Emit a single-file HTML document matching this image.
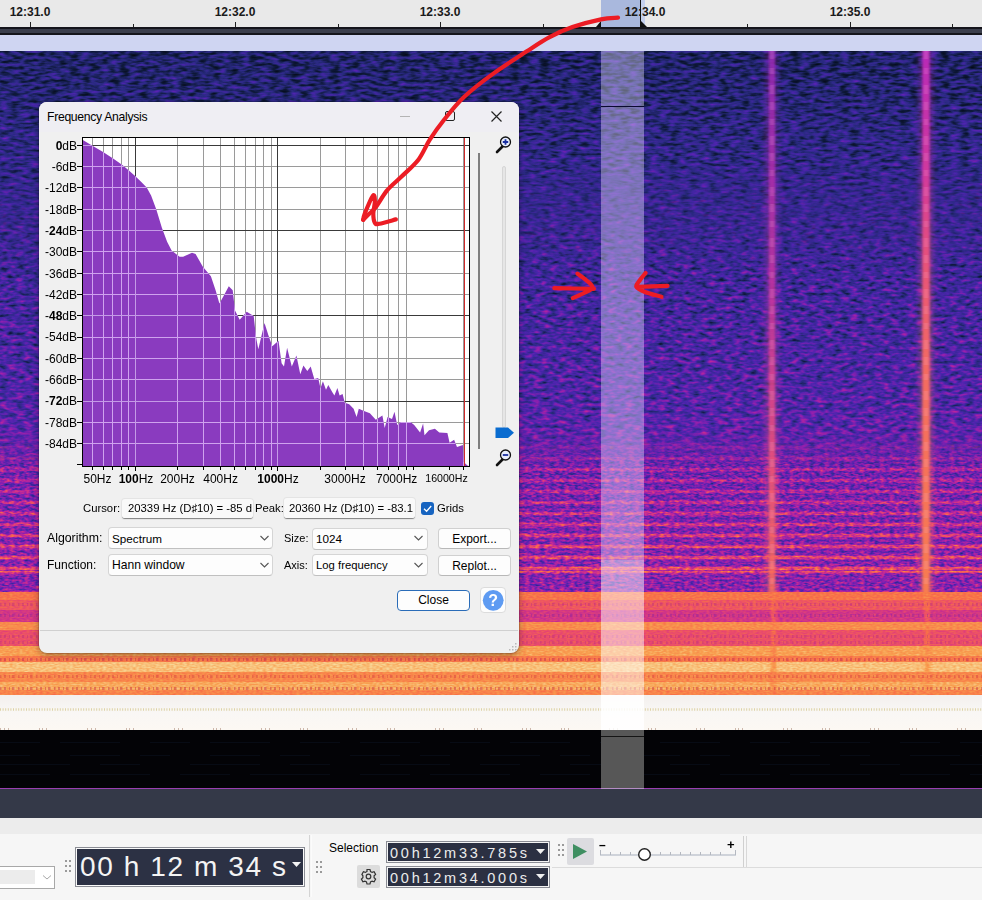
<!DOCTYPE html>
<html><head><meta charset="utf-8">
<style>
html,body{margin:0;padding:0;}
body{width:982px;height:900px;overflow:hidden;position:relative;background:#e9e9e9;font-family:"Liberation Sans",sans-serif;}
.abs{position:absolute;}
#ruler{left:0;top:0;width:982px;height:27px;background:#e9e9e9;}
.rl{position:absolute;top:5px;font-weight:bold;font-size:12px;line-height:14px;color:#1a1a1a;width:60px;text-align:center;margin-left:-30px;}
.tk{position:absolute;width:1px;background:#222;}
#bar{left:0;top:27px;width:982px;height:8px;background:#3b3e4c;border-top:2px solid #15151c;border-bottom:2px solid #15151c;box-sizing:border-box;}
#lav{left:0;top:35px;width:982px;height:16px;background:#cfd5f2;}
#black{left:0;top:730px;width:982px;height:58px;background:#030306;}
#pline{left:0;top:788px;width:982px;height:1px;background:#9a3fb0;}
#slate{left:0;top:789px;width:982px;height:29px;background:#343948;}
#tb1{left:0;top:818px;width:982px;height:16px;background:#ececec;}
#tb2{left:0;top:834px;width:982px;height:66px;background:#f6f6f6;}
#dlg{left:39px;top:102px;width:480px;height:551px;background:#f0f0f0;border-radius:8px;box-shadow:0 0 0 1px rgba(0,0,0,0.12),0 2px 7px rgba(0,0,0,0.35);overflow:hidden;}
.dbl{position:absolute;left:21px;width:56px;text-align:right;font-size:12px;line-height:15px;color:#000;}
.dbl b,.fql b{font-weight:bold;}
.fql{position:absolute;top:472px;width:80px;text-align:center;font-size:12px;line-height:15px;color:#000;}
.lbl{position:absolute;font-size:12px;line-height:15px;color:#000;white-space:nowrap;}
.combo{position:absolute;background:#fdfdfd;border:1px solid #d5d5d5;border-bottom-color:#c0c0c0;border-radius:4px;box-sizing:border-box;}
.btn{position:absolute;background:#fdfdfd;border:1px solid #d0d0d0;border-bottom-color:#b8b8b8;border-radius:4px;box-sizing:border-box;font-size:12px;text-align:center;color:#000;}

</style></head>
<body>
<div id="ruler" class="abs">
  <div class="rl" style="left:30px">12:31.0</div>
  <div class="rl" style="left:235px">12:32.0</div>
  <div class="rl" style="left:440px">12:33.0</div>
  <div class="rl" style="left:850px">12:35.0</div>
  <div class="tk" style="left:30px;top:22px;height:5px"></div>
  <div class="tk" style="left:235px;top:22px;height:5px"></div>
  <div class="tk" style="left:440px;top:22px;height:5px"></div>
  <div class="tk" style="left:850px;top:22px;height:5px"></div>
  <div class="tk" style="left:133px;top:24px;height:3px"></div>
  <div class="tk" style="left:338px;top:24px;height:3px"></div>
  <div class="tk" style="left:543px;top:24px;height:3px"></div>
  <div class="tk" style="left:747px;top:24px;height:3px"></div>
  <div class="tk" style="left:952px;top:24px;height:3px"></div>
  <div class="abs" style="left:601px;top:0;width:40px;height:27px;background:#a9b8dd"></div>
  <div class="abs" style="left:641px;top:0;width:4px;height:27px;background:#c4d0ee"></div>
  <div class="rl" style="left:645px">12:34.0</div>
  <div class="abs" style="left:640px;top:0;width:1px;height:27px;background:#111"></div>
  <svg class="abs" style="left:594px;top:21px" width="56" height="7"><polygon points="2,6 7,0 7,6" fill="#111"/><polygon points="47,0 53,6 47,6" fill="#111"/></svg>
</div>
<div id="bar" class="abs"></div>
<div id="lav" class="abs"></div>

<svg class="abs" style="left:0;top:51px" width="982" height="679" viewBox="0 51 982 679">
<defs>
<linearGradient id="gu" x1="0" y1="51" x2="0" y2="470" gradientUnits="userSpaceOnUse"><stop offset="0.0000" stop-color="#292929"/><stop offset="0.1169" stop-color="#2f2f2f"/><stop offset="0.3556" stop-color="#3c3c3c"/><stop offset="0.5943" stop-color="#444444"/><stop offset="0.8329" stop-color="#4c4c4c"/><stop offset="1.0000" stop-color="#595959"/></linearGradient>
<linearGradient id="gm" x1="0" y1="430" x2="0" y2="592" gradientUnits="userSpaceOnUse"><stop offset="0.0000" stop-color="#535353"/><stop offset="0.0617" stop-color="#555555"/><stop offset="0.0926" stop-color="#575757"/><stop offset="0.1019" stop-color="#6d6d6d"/><stop offset="0.1142" stop-color="#6d6d6d"/><stop offset="0.1235" stop-color="#575757"/><stop offset="0.1605" stop-color="#595959"/><stop offset="0.1698" stop-color="#717171"/><stop offset="0.1821" stop-color="#717171"/><stop offset="0.1914" stop-color="#595959"/><stop offset="0.2284" stop-color="#5a5a5a"/><stop offset="0.2377" stop-color="#757575"/><stop offset="0.2500" stop-color="#757575"/><stop offset="0.2593" stop-color="#5a5a5a"/><stop offset="0.2963" stop-color="#5b5b5b"/><stop offset="0.3056" stop-color="#797979"/><stop offset="0.3179" stop-color="#797979"/><stop offset="0.3272" stop-color="#5b5b5b"/><stop offset="0.3642" stop-color="#5c5c5c"/><stop offset="0.3735" stop-color="#7c7c7c"/><stop offset="0.3858" stop-color="#7c7c7c"/><stop offset="0.3951" stop-color="#5c5c5c"/><stop offset="0.4321" stop-color="#5e5e5e"/><stop offset="0.4414" stop-color="#808080"/><stop offset="0.4537" stop-color="#808080"/><stop offset="0.4630" stop-color="#5e5e5e"/><stop offset="0.5000" stop-color="#5f5f5f"/><stop offset="0.5093" stop-color="#848484"/><stop offset="0.5216" stop-color="#848484"/><stop offset="0.5309" stop-color="#5f5f5f"/><stop offset="0.5679" stop-color="#606060"/><stop offset="0.5772" stop-color="#888888"/><stop offset="0.5895" stop-color="#888888"/><stop offset="0.5988" stop-color="#606060"/><stop offset="0.6358" stop-color="#626262"/><stop offset="0.6451" stop-color="#8c8c8c"/><stop offset="0.6574" stop-color="#8c8c8c"/><stop offset="0.6667" stop-color="#626262"/><stop offset="0.7037" stop-color="#636363"/><stop offset="0.7130" stop-color="#909090"/><stop offset="0.7253" stop-color="#909090"/><stop offset="0.7346" stop-color="#636363"/><stop offset="0.7716" stop-color="#646464"/><stop offset="0.7809" stop-color="#949494"/><stop offset="0.7932" stop-color="#949494"/><stop offset="0.8025" stop-color="#646464"/><stop offset="0.8395" stop-color="#666666"/><stop offset="0.8488" stop-color="#989898"/><stop offset="0.8611" stop-color="#989898"/><stop offset="0.8704" stop-color="#666666"/><stop offset="0.8395" stop-color="#696969"/><stop offset="0.8519" stop-color="#9e9e9e"/><stop offset="0.8765" stop-color="#9e9e9e"/><stop offset="0.8889" stop-color="#666666"/><stop offset="0.9877" stop-color="#666666"/><stop offset="1.0000" stop-color="#737373"/></linearGradient>
<linearGradient id="gl" x1="0" y1="592" x2="0" y2="695" gradientUnits="userSpaceOnUse"><stop offset="0.0049" stop-color="#b5b5b5"/><stop offset="0.0728" stop-color="#b5b5b5"/><stop offset="0.0825" stop-color="#a3a3a3"/><stop offset="0.1699" stop-color="#a3a3a3"/><stop offset="0.1796" stop-color="#8c8c8c"/><stop offset="0.2864" stop-color="#8c8c8c"/><stop offset="0.2961" stop-color="#c2c2c2"/><stop offset="0.3641" stop-color="#c2c2c2"/><stop offset="0.3738" stop-color="#9e9e9e"/><stop offset="0.5194" stop-color="#9e9e9e"/><stop offset="0.5291" stop-color="#cccccc"/><stop offset="0.6165" stop-color="#cccccc"/><stop offset="0.6262" stop-color="#b8b8b8"/><stop offset="0.6748" stop-color="#b8b8b8"/><stop offset="0.6845" stop-color="#dbdbdb"/><stop offset="0.7718" stop-color="#dbdbdb"/><stop offset="0.7816" stop-color="#bfbfbf"/><stop offset="0.8689" stop-color="#bfbfbf"/><stop offset="0.8786" stop-color="#d1d1d1"/><stop offset="0.9466" stop-color="#d1d1d1"/><stop offset="0.9563" stop-color="#bdbdbd"/><stop offset="0.9951" stop-color="#bdbdbd"/></linearGradient>
<linearGradient id="mk" x1="0" y1="430" x2="0" y2="470" gradientUnits="userSpaceOnUse"><stop offset="0" stop-color="#000"/><stop offset="1" stop-color="#fff"/></linearGradient>
<mask id="mm" maskUnits="userSpaceOnUse" x="0" y="430" width="982" height="162"><rect x="0" y="430" width="982" height="162" fill="url(#mk)"/></mask>
<linearGradient id="mk2" x1="0" y1="160" x2="0" y2="280" gradientUnits="userSpaceOnUse"><stop offset="0" stop-color="#000"/><stop offset="1" stop-color="#fff"/></linearGradient>
<mask id="mu" maskUnits="userSpaceOnUse" x="0" y="160" width="982" height="310"><rect x="0" y="160" width="982" height="310" fill="url(#mk2)"/></mask>
<filter id="ft" x="0" y="0" width="100%" height="100%" color-interpolation-filters="sRGB" filterUnits="objectBoundingBox"><feTurbulence type="fractalNoise" baseFrequency="0.1 0.3" numOctaves="2" seed="5" result="t"/><feColorMatrix in="t" type="matrix" values="1 0 0 0 0 1 0 0 0 0 1 0 0 0 0 0 0 0 0 1" result="tg"/><feComposite in="SourceGraphic" in2="tg" operator="arithmetic" k1="0" k2="1" k3="0.42" k4="-0.21" result="sum"/><feComponentTransfer in="sum"><feFuncR type="table" tableValues="0.020 0.039 0.059 0.112 0.165 0.231 0.298 0.420 0.541 0.647 0.753 0.831 0.910 0.941 0.973 0.973 0.973 0.973 0.973 0.982 0.992"/><feFuncG type="table" tableValues="0.039 0.071 0.102 0.133 0.165 0.155 0.145 0.135 0.125 0.141 0.157 0.220 0.282 0.361 0.439 0.533 0.627 0.737 0.847 0.910 0.973"/><feFuncB type="table" tableValues="0.094 0.165 0.235 0.373 0.510 0.596 0.682 0.686 0.690 0.643 0.596 0.518 0.439 0.361 0.282 0.298 0.314 0.455 0.596 0.769 0.941"/><feFuncA type="linear" slope="0" intercept="1"/></feComponentTransfer></filter>
<filter id="fu" x="0" y="0" width="100%" height="100%" color-interpolation-filters="sRGB" filterUnits="objectBoundingBox"><feTurbulence type="fractalNoise" baseFrequency="0.12 0.28" numOctaves="2" seed="7" result="t"/><feColorMatrix in="t" type="matrix" values="1 0 0 0 0 1 0 0 0 0 1 0 0 0 0 0 0 0 0 1" result="tg"/><feComposite in="SourceGraphic" in2="tg" operator="arithmetic" k1="0" k2="1" k3="0.5" k4="-0.25" result="sum"/><feComponentTransfer in="sum"><feFuncR type="table" tableValues="0.020 0.039 0.059 0.112 0.165 0.231 0.298 0.420 0.541 0.647 0.753 0.831 0.910 0.941 0.973 0.973 0.973 0.973 0.973 0.982 0.992"/><feFuncG type="table" tableValues="0.039 0.071 0.102 0.133 0.165 0.155 0.145 0.135 0.125 0.141 0.157 0.220 0.282 0.361 0.439 0.533 0.627 0.737 0.847 0.910 0.973"/><feFuncB type="table" tableValues="0.094 0.165 0.235 0.373 0.510 0.596 0.682 0.686 0.690 0.643 0.596 0.518 0.439 0.361 0.282 0.298 0.314 0.455 0.596 0.769 0.941"/><feFuncA type="linear" slope="0" intercept="1"/></feComponentTransfer></filter>
<filter id="fm" x="0" y="0" width="100%" height="100%" color-interpolation-filters="sRGB" filterUnits="objectBoundingBox"><feTurbulence type="fractalNoise" baseFrequency="0.2 0.45" numOctaves="2" seed="23" result="t"/><feColorMatrix in="t" type="matrix" values="1 0 0 0 0 1 0 0 0 0 1 0 0 0 0 0 0 0 0 1" result="tg"/><feComposite in="SourceGraphic" in2="tg" operator="arithmetic" k1="0" k2="1" k3="0.5" k4="-0.25" result="sum"/><feComponentTransfer in="sum"><feFuncR type="table" tableValues="0.020 0.039 0.059 0.112 0.165 0.231 0.298 0.420 0.541 0.647 0.753 0.831 0.910 0.941 0.973 0.973 0.973 0.973 0.973 0.982 0.992"/><feFuncG type="table" tableValues="0.039 0.071 0.102 0.133 0.165 0.155 0.145 0.135 0.125 0.141 0.157 0.220 0.282 0.361 0.439 0.533 0.627 0.737 0.847 0.910 0.973"/><feFuncB type="table" tableValues="0.094 0.165 0.235 0.373 0.510 0.596 0.682 0.686 0.690 0.643 0.596 0.518 0.439 0.361 0.282 0.298 0.314 0.455 0.596 0.769 0.941"/><feFuncA type="linear" slope="0" intercept="1"/></feComponentTransfer></filter>
<filter id="fl" x="0" y="0" width="100%" height="100%" color-interpolation-filters="sRGB" filterUnits="objectBoundingBox"><feTurbulence type="fractalNoise" baseFrequency="0.3 0.7" numOctaves="1" seed="13" result="t"/><feColorMatrix in="t" type="matrix" values="1 0 0 0 0 1 0 0 0 0 1 0 0 0 0 0 0 0 0 1" result="tg"/><feComposite in="SourceGraphic" in2="tg" operator="arithmetic" k1="0" k2="1" k3="0.16" k4="-0.08" result="sum"/><feComponentTransfer in="sum"><feFuncR type="table" tableValues="0.020 0.039 0.059 0.112 0.165 0.231 0.298 0.420 0.541 0.647 0.753 0.831 0.910 0.941 0.973 0.973 0.973 0.973 0.973 0.982 0.992"/><feFuncG type="table" tableValues="0.039 0.071 0.102 0.133 0.165 0.155 0.145 0.135 0.125 0.141 0.157 0.220 0.282 0.361 0.439 0.533 0.627 0.737 0.847 0.910 0.973"/><feFuncB type="table" tableValues="0.094 0.165 0.235 0.373 0.510 0.596 0.682 0.686 0.690 0.643 0.596 0.518 0.439 0.361 0.282 0.298 0.314 0.455 0.596 0.769 0.941"/><feFuncA type="linear" slope="0" intercept="1"/></feComponentTransfer></filter>
<linearGradient id="c1" x1="0" y1="51" x2="0" y2="592" gradientUnits="userSpaceOnUse"><stop offset="0" stop-color="#9a2ab8"/><stop offset="0.45" stop-color="#c4369e"/><stop offset="0.75" stop-color="#ec5478"/><stop offset="1" stop-color="#f87058"/></linearGradient>
<linearGradient id="c2" x1="0" y1="51" x2="0" y2="592" gradientUnits="userSpaceOnUse"><stop offset="0" stop-color="#b82ab8"/><stop offset="0.22" stop-color="#d0389e"/><stop offset="0.4" stop-color="#e85478"/><stop offset="0.6" stop-color="#f46c60"/><stop offset="1" stop-color="#f87c50"/></linearGradient>
<filter id="bl2" x="-1" y="0" width="3" height="1"><feGaussianBlur stdDeviation="1.0 0"/></filter>
<filter id="bl" x="-1" y="0" width="3" height="1"><feGaussianBlur stdDeviation="1.5 0"/></filter>
</defs>
<g filter="url(#ft)"><rect x="0" y="51" width="982" height="230" fill="url(#gu)"/></g>
<g mask="url(#mu)"><g filter="url(#fu)"><rect x="0" y="160" width="982" height="310" fill="url(#gu)"/></g></g>
<g mask="url(#mm)"><g filter="url(#fm)"><rect x="0" y="430" width="982" height="162" fill="url(#gm)"/></g></g>
<filter id="bl3" x="-2" y="0" width="5" height="1"><feGaussianBlur stdDeviation="3 0"/></filter>
<g filter="url(#bl3)" opacity="0.45"><rect x="766" y="51" width="11" height="541" fill="url(#c1)"/><rect x="920" y="51" width="12" height="541" fill="url(#c2)"/></g>
<g filter="url(#bl2)"><rect x="769" y="51" width="6" height="541" fill="url(#c1)" opacity="0.8"/><rect x="922.5" y="51" width="7" height="541" fill="url(#c2)"/></g>
<g opacity="0.16" stroke="#ffc0f0" stroke-width="5" stroke-dasharray="8 9 6 11 9 8" filter="url(#bl2)"><line x1="772" y1="51" x2="772" y2="592"/><line x1="926" y1="51" x2="926" y2="592"/></g>
<g filter="url(#fl)">
<rect x="0" y="592" width="982" height="103" fill="url(#gl)"/>
<g filter="url(#bl)"><rect x="771" y="592" width="5" height="103" fill="#b8b8b8" opacity="0.6"/><rect x="924" y="592" width="6" height="103" fill="#bdbdbd" opacity="0.5"/></g>
</g>
<line x1="0" y1="604.5" x2="982" y2="604.5" stroke="#b02a80" stroke-width="3" stroke-dasharray="1.5 2.5 2 3 1 2 2.5 3.5" opacity="0.35"/>
<line x1="0" y1="615.5" x2="982" y2="615.5" stroke="#8a2a9a" stroke-width="3" stroke-dasharray="1.5 2.5 2 3 1 2 2.5 3.5" opacity="0.4"/>
<line x1="0" y1="636.5" x2="982" y2="636.5" stroke="#b02a80" stroke-width="3" stroke-dasharray="1.5 2.5 2 3 1 2 2.5 3.5" opacity="0.35"/>
<line x1="0" y1="642.5" x2="982" y2="642.5" stroke="#b02a80" stroke-width="3" stroke-dasharray="1.5 2.5 2 3 1 2 2.5 3.5" opacity="0.3"/>
<line x1="0" y1="659.5" x2="982" y2="659.5" stroke="#c02850" stroke-width="3" stroke-dasharray="1.5 2.5 2 3 1 2 2.5 3.5" opacity="0.45"/>
<line x1="0" y1="676.5" x2="982" y2="676.5" stroke="#d03a40" stroke-width="3" stroke-dasharray="1.5 2.5 2 3 1 2 2.5 3.5" opacity="0.4"/>
<line x1="0" y1="688.5" x2="982" y2="688.5" stroke="#c83040" stroke-width="3" stroke-dasharray="1.5 2.5 2 3 1 2 2.5 3.5" opacity="0.45"/>
<linearGradient id="wb" x1="0" y1="695" x2="0" y2="730" gradientUnits="userSpaceOnUse"><stop offset="0" stop-color="#f3f0ee"/><stop offset="0.5" stop-color="#f9f7f5"/><stop offset="1" stop-color="#fcf8f3"/></linearGradient>
<rect x="0" y="695" width="982" height="35" fill="url(#wb)"/>
<line x1="0" y1="709.5" x2="982" y2="709.5" stroke="#ddd3a6" stroke-width="2.5" stroke-dasharray="1 1.6"/>
<line x1="0" y1="729" x2="982" y2="729" stroke="#b09080" stroke-width="2" stroke-dasharray="1 3 1 3 1 30 1 2 1 3 1 40" opacity="0.6"/>
<rect x="601" y="51" width="43" height="55" fill="#e8e4ff" opacity="0.4"/>
<rect x="601" y="106" width="43" height="454" fill="#e8dcff" opacity="0.42"/>
<rect x="601" y="560" width="43" height="135" fill="#ffffff" opacity="0.5"/>
<rect x="601" y="695" width="43" height="35" fill="#ffffff" opacity="0.85"/>
<line x1="601" y1="106.5" x2="644" y2="106.5" stroke="#0a0a30" stroke-width="1"/>
</svg>
<div id="black" class="abs"></div>
<svg class="abs" style="left:0;top:730px" width="982" height="58"><g stroke="#0e1626" stroke-width="1" opacity="0.45"><line x1="0" y1="12.5" x2="982" y2="12.5" stroke-dasharray="40 20 60 30"/><line x1="0" y1="25.5" x2="982" y2="25.5" stroke-dasharray="30 40 50 20"/><line x1="0" y1="34.5" x2="982" y2="34.5" stroke-dasharray="70 30 40 50"/><line x1="0" y1="44.5" x2="982" y2="44.5" stroke-dasharray="50 20 80 30"/></g></svg>
<div class="abs" style="left:601px;top:730px;width:43px;height:58px;background:#575757"></div>
<div class="abs" style="left:601px;top:736px;width:43px;height:1px;background:#151515"></div>
<div id="pline" class="abs"></div>
<div class="abs" style="left:601px;top:788px;width:43px;height:1px;background:#b48cc4"></div>
<div id="slate" class="abs"></div>
<div id="tb1" class="abs"></div>
<div id="tb2" class="abs"></div>
<!-- left combobox -->
<div class="abs" style="left:-4px;top:866px;width:59px;height:23px;background:#fff;border:1px solid #a8a8a8;box-sizing:border-box"></div>
<div class="abs" style="left:0;top:870px;width:35px;height:14px;background:#ececec"></div>
<svg class="abs" style="left:42px;top:872px" width="12" height="10"><polyline points="1,3.5 5,7 9,3.5" fill="none" stroke="#a8a8a8" stroke-width="1"/></svg>
<!-- grips -->
<svg class="abs" style="left:64px;top:859px" width="8" height="16"><g fill="#9a9a9a"><rect x="1" y="1" width="2" height="2"/><rect x="5" y="1" width="2" height="2"/><rect x="1" y="6" width="2" height="2"/><rect x="5" y="6" width="2" height="2"/><rect x="1" y="11" width="2" height="2"/><rect x="5" y="11" width="2" height="2"/></g></svg>
<!-- big time -->
<div class="abs" style="left:75px;top:847px;width:230px;height:40px;background:#2c3144;border:1px solid #8a8c94;box-shadow:inset 0 0 0 1px #fafafa, inset 0 0 0 2px #2c3144;box-sizing:border-box"></div>
<div class="abs" style="left:80px;top:851px;font-size:28px;line-height:32px;color:#f4f4f4;letter-spacing:1.6px;white-space:nowrap">00 h 12 m 34 s</div>
<svg class="abs" style="left:292px;top:862px" width="10" height="7"><polygon points="0,0 9,0 4.5,5" fill="#f4f4f4"/></svg>
<div class="abs" style="left:309px;top:835px;width:1px;height:62px;background:#d4d4d4"></div>
<div class="abs" style="left:311px;top:835px;width:1px;height:62px;background:#fbfbfb"></div>
<svg class="abs" style="left:315px;top:860px" width="8" height="16"><g fill="#9a9a9a"><rect x="1" y="1" width="2" height="2"/><rect x="5" y="1" width="2" height="2"/><rect x="1" y="6" width="2" height="2"/><rect x="5" y="6" width="2" height="2"/><rect x="1" y="11" width="2" height="2"/><rect x="5" y="11" width="2" height="2"/></g></svg>
<div class="lbl" style="left:329px;top:841px;font-size:12px">Selection</div>
<!-- gear -->
<div class="abs" style="left:357px;top:865px;width:23px;height:23px;background:#dcdcdc;border-radius:2px"></div>
<svg class="abs" style="left:359px;top:867px" width="19" height="19" viewBox="0 0 19 19"><g fill="none" stroke="#333" stroke-width="1.2"><path d="M8 2.5h3l.5 2 1.6.9 2-.6 1.5 2.6-1.5 1.4v1.9l1.5 1.4-1.5 2.6-2-.6-1.6.9-.5 2h-3l-.5-2-1.6-.9-2 .6-1.5-2.6 1.5-1.4V8.8L2.9 7.4l1.5-2.6 2 .6 1.6-.9z"/><circle cx="9.5" cy="9.5" r="2.3"/></g></svg>
<!-- selection times -->
<div class="abs" style="left:386px;top:841px;width:164px;height:22px;background:#2b3042;border:1px solid #8a8c94;box-shadow:inset 0 0 0 1px #f4f4f4;box-sizing:border-box"></div>
<div class="abs" style="left:390px;top:845px;font-size:14.5px;line-height:16px;color:#ececec;letter-spacing:2.75px;white-space:nowrap">00h12m33.785s</div>
<svg class="abs" style="left:536px;top:849px" width="10" height="7"><polygon points="0,0 9,0 4.5,5" fill="#f0f0f0"/></svg>
<div class="abs" style="left:386px;top:866px;width:164px;height:22px;background:#2b3042;border:1px solid #8a8c94;box-shadow:inset 0 0 0 1px #f4f4f4;box-sizing:border-box"></div>
<div class="abs" style="left:390px;top:870px;font-size:14.5px;line-height:16px;color:#ececec;letter-spacing:2.75px;white-space:nowrap">00h12m34.000s</div>
<svg class="abs" style="left:536px;top:874px" width="10" height="7"><polygon points="0,0 9,0 4.5,5" fill="#f0f0f0"/></svg>
<div class="abs" style="left:552px;top:867px;width:430px;height:1px;background:#dcdcdc"></div>
<svg class="abs" style="left:557px;top:843px" width="8" height="16"><g fill="#9a9a9a"><rect x="1" y="1" width="2" height="2"/><rect x="5" y="1" width="2" height="2"/><rect x="1" y="6" width="2" height="2"/><rect x="5" y="6" width="2" height="2"/><rect x="1" y="11" width="2" height="2"/><rect x="5" y="11" width="2" height="2"/></g></svg>
<!-- play -->
<div class="abs" style="left:567px;top:838px;width:27px;height:27px;background:#dcdce0;border-radius:2px"></div>
<svg class="abs" style="left:572px;top:843px" width="18" height="18"><polygon points="1,1 15,8.5 1,16" fill="#3f8f62"/></svg>
<!-- slider -->
<div class="lbl" style="left:599px;top:838px;font-size:12px;font-weight:bold">&#8211;</div>
<div class="lbl" style="left:727px;top:837px;font-size:13px;font-weight:bold">+</div>
<div class="abs" style="left:600px;top:854px;width:136px;height:2px;background:#cfd3da"></div>
<svg class="abs" style="left:599px;top:849px" width="140" height="8"><g stroke="#b4b8c0" stroke-width="1"><line x1="1.5" y1="1" x2="1.5" y2="6"/><line x1="11.5" y1="3" x2="11.5" y2="6"/><line x1="21.5" y1="3" x2="21.5" y2="6"/><line x1="31.5" y1="3" x2="31.5" y2="6"/><line x1="41.5" y1="3" x2="41.5" y2="6"/><line x1="51.5" y1="3" x2="51.5" y2="6"/><line x1="61.5" y1="3" x2="61.5" y2="6"/><line x1="71.5" y1="3" x2="71.5" y2="6"/><line x1="81.5" y1="3" x2="81.5" y2="6"/><line x1="91.5" y1="3" x2="91.5" y2="6"/><line x1="101.5" y1="3" x2="101.5" y2="6"/><line x1="111.5" y1="3" x2="111.5" y2="6"/><line x1="121.5" y1="3" x2="121.5" y2="6"/><line x1="136.5" y1="1" x2="136.5" y2="6"/></g></svg>
<svg class="abs" style="left:637px;top:847px" width="16" height="16"><circle cx="7.5" cy="7.5" r="5.8" fill="#fff" stroke="#222" stroke-width="1.4"/></svg>
<div class="abs" style="left:743px;top:836px;width:1px;height:31px;background:#d0d0d0"></div>
<div class="abs" style="left:746px;top:836px;width:1px;height:31px;background:#d8d8d8"></div>

<div id="dlg" class="abs"></div>
<div class="abs" style="left:39px;top:102px;width:480px;height:30px;background:#efeef3;border-radius:8px 8px 0 0"></div>
<div class="lbl" style="left:47px;top:110.2px;font-size:12.2px;letter-spacing:-0.3px">Frequency Analysis</div>
<div class="abs" style="left:400px;top:116px;width:10px;height:1px;background:#b4b4b4"></div>
<div class="abs" style="left:445px;top:111px;width:10px;height:10px;border:1.2px solid #222;border-radius:2px;box-sizing:border-box"></div>
<svg class="abs" style="left:490px;top:110px" width="13" height="13"><path d="M1.5 1.5L11.5 11.5M11.5 1.5L1.5 11.5" stroke="#222" stroke-width="1.2"/></svg>
<!-- right slider -->
<div class="abs" style="left:478px;top:153px;width:2px;height:296px;background:#7e7e7e"></div>
<div class="abs" style="left:502px;top:166px;width:4px;height:262px;background:#e6e6e6;border:1px solid #d6d6d6;box-sizing:border-box;border-radius:2px"></div>
<svg class="abs" style="left:494px;top:426px" width="22" height="14"><polygon points="1.5,1.5 14,1.5 20,6.75 14,12 1.5,12" fill="#0a6cd0"/></svg>
<svg class="abs" style="left:492px;top:134px" width="22" height="22"><line x1="5" y1="18" x2="10.5" y2="12.5" stroke="#111" stroke-width="2.6" stroke-linecap="round"/><circle cx="13.5" cy="8" r="5" fill="#e8eefc" stroke="#111" stroke-width="1.3"/><path d="M10.8 8h5.4M13.5 5.3v5.4" stroke="#1a2fa0" stroke-width="1.8"/></svg>
<svg class="abs" style="left:492px;top:447px" width="22" height="22"><line x1="5" y1="18" x2="10.5" y2="12.5" stroke="#111" stroke-width="2.6" stroke-linecap="round"/><circle cx="13.5" cy="8" r="5" fill="#e8eefc" stroke="#111" stroke-width="1.3"/><path d="M10.8 8h5.4" stroke="#1a2fa0" stroke-width="1.8"/></svg>
<!-- cursor / peak row -->
<div class="lbl" style="left:83px;top:501px;font-size:11.3px">Cursor:</div>
<div class="abs" style="left:122px;top:499px;width:131px;height:20px;background:#f9f9f9;border-radius:3px;border-bottom:1px solid #8a8a8a;box-sizing:border-box;box-shadow:0 0 0 1px #e4e4e4"></div>
<div class="lbl" style="left:128px;top:501px;font-size:11.3px">20339 Hz (D&#9839;10) = -85 d</div>
<div class="lbl" style="left:255px;top:501px;font-size:11.3px">Peak:</div>
<div class="abs" style="left:284px;top:498px;width:131px;height:21px;background:#f9f9f9;border-radius:3px;border-bottom:1px solid #8a8a8a;box-sizing:border-box;box-shadow:0 0 0 1px #e4e4e4"></div>
<div class="lbl" style="left:289px;top:501px;font-size:11.3px">20360 Hz (D&#9839;10) = -83.1</div>
<div class="abs" style="left:421px;top:502px;width:13px;height:13px;background:#1764c0;border-radius:3px"></div>
<svg class="abs" style="left:421px;top:502px" width="13" height="13"><polyline points="3,6.8 5.6,9.2 10.2,4" fill="none" stroke="#fff" stroke-width="1.3"/></svg>
<div class="lbl" style="left:437px;top:501px;font-size:11.3px">Grids</div>
<!-- algorithm row -->
<div class="lbl" style="left:47px;top:531px;font-size:12.3px">Algorithm:</div>
<div class="combo" style="left:108px;top:527px;width:165px;height:22px"></div>
<div class="lbl" style="left:112px;top:531px;font-size:11.7px">Spectrum</div>
<svg class="abs" style="left:259px;top:534px" width="12" height="8"><polyline points="1.5,2 5.5,6 9.5,2" fill="none" stroke="#555" stroke-width="1.1"/></svg>
<div class="lbl" style="left:284px;top:531px;font-size:11px">Size:</div>
<div class="combo" style="left:312px;top:528px;width:116px;height:22px"></div>
<div class="lbl" style="left:316px;top:531px;font-size:11.7px">1024</div>
<svg class="abs" style="left:413px;top:534px" width="12" height="8"><polyline points="1.5,2 5.5,6 9.5,2" fill="none" stroke="#555" stroke-width="1.1"/></svg>
<div class="btn" style="left:438px;top:528px;width:73px;height:21px;line-height:21px">Export...</div>
<!-- function row -->
<div class="lbl" style="left:47px;top:558px;font-size:12px">Function:</div>
<div class="combo" style="left:108px;top:554px;width:165px;height:22px"></div>
<div class="lbl" style="left:112px;top:558px;font-size:12.1px">Hann window</div>
<svg class="abs" style="left:259px;top:561px" width="12" height="8"><polyline points="1.5,2 5.5,6 9.5,2" fill="none" stroke="#555" stroke-width="1.1"/></svg>
<div class="lbl" style="left:284px;top:558px;font-size:11px">Axis:</div>
<div class="combo" style="left:312px;top:554px;width:116px;height:22px"></div>
<div class="lbl" style="left:316px;top:558px;font-size:11.3px">Log frequency</div>
<svg class="abs" style="left:413px;top:561px" width="12" height="8"><polyline points="1.5,2 5.5,6 9.5,2" fill="none" stroke="#555" stroke-width="1.1"/></svg>
<div class="btn" style="left:438px;top:555px;width:73px;height:21px;line-height:21px">Replot...</div>
<!-- close / help -->
<div class="btn" style="left:397px;top:590px;width:73px;height:21px;line-height:19px;border:1.5px solid #2a6cb8;background:#fdfdfd">Close</div>
<div class="btn" style="left:480px;top:587px;width:26px;height:26px;border-color:#dcdcdc"></div>
<svg class="abs" style="left:480px;top:587px" width="26" height="26"><circle cx="13.2" cy="13.3" r="10.4" fill="#5e9bf2"/><text x="13.2" y="18.8" font-family="Liberation Sans" font-size="16" font-weight="bold" fill="#fff" text-anchor="middle">?</text></svg>
<div class="abs" style="left:40px;top:630px;width:478px;height:1px;background:#d0d0d0"></div>
<svg class="abs" style="left:508px;top:642px" width="10" height="10"><g fill="#b8b8b8"><rect x="7" y="1" width="1.5" height="1.5"/><rect x="4" y="4" width="1.5" height="1.5"/><rect x="7" y="4" width="1.5" height="1.5"/><rect x="1" y="7" width="1.5" height="1.5"/><rect x="4" y="7" width="1.5" height="1.5"/><rect x="7" y="7" width="1.5" height="1.5"/></g></svg>

<svg class="abs" style="left:0;top:0" width="982" height="900" viewBox="0 0 982 900">
<defs><clipPath id="pc"><polygon points="82.0,139.5 92.4,145.7 103.1,151.9 113.8,159.0 122.7,165.2 128.9,170.6 135.1,175.9 141.3,182.1 146.7,187.4 151.1,195.4 156.4,209.7 161.8,227.4 167.1,241.7 171.6,250.6 179.6,256.8 183.1,256.8 192.0,252.7 195.6,254.1 202.7,266.6 206.2,270.8 210.9,276.2 215.6,290.2 219.4,303.4 223.3,296.4 228.8,286.3 232.7,290.2 235.0,310.4 239.7,319.8 246.7,311.7 253.7,315.9 256.0,336.9 258.3,349.3 264.5,322.9 268.4,335.3 272.3,346.2 278.5,340.8 281.6,363.3 284.0,366.4 287.1,347.8 291.8,366.4 296.4,355.5 300.3,374.2 303.4,365.6 307.3,371.1 310.7,366.4 314.3,378.9 318.2,378.1 320.5,388.2 322.9,381.2 326.0,389.7 328.3,385.1 332.2,392.1 334.4,395.5 337.4,388.1 339.6,395.5 342.6,394.0 344.8,402.8 349.2,404.3 353.6,408.7 356.6,416.9 358.8,408.7 364.0,411.0 369.9,413.2 375.8,419.8 382.4,415.4 384.7,428.0 387.6,416.9 392.0,419.1 394.5,411.7 397.2,425.0 400.9,422.0 410.5,422.0 414.2,425.0 420.1,432.4 423.1,423.5 424.5,435.3 429.0,430.2 434.9,428.7 439.3,432.4 447.4,433.1 449.6,442.7 454.1,439.8 457.0,447.1 462.9,444.9 463.7,461.9 467.4,465.6 469.0,466.0 82.0,466.0"/></clipPath></defs>
<rect x="82" y="137" width="388" height="330" fill="#ffffff"/>
<g stroke-width="1"><line x1="92.5" y1="137.5" x2="92.5" y2="466.5" stroke="#9a9a9a"/>
<line x1="103.5" y1="137.5" x2="103.5" y2="466.5" stroke="#9a9a9a"/>
<line x1="112.5" y1="137.5" x2="112.5" y2="466.5" stroke="#9a9a9a"/>
<line x1="121.5" y1="137.5" x2="121.5" y2="466.5" stroke="#9a9a9a"/>
<line x1="128.5" y1="137.5" x2="128.5" y2="466.5" stroke="#9a9a9a"/>
<line x1="177.5" y1="137.5" x2="177.5" y2="466.5" stroke="#9a9a9a"/>
<line x1="203.5" y1="137.5" x2="203.5" y2="466.5" stroke="#9a9a9a"/>
<line x1="220.5" y1="137.5" x2="220.5" y2="466.5" stroke="#9a9a9a"/>
<line x1="234.5" y1="137.5" x2="234.5" y2="466.5" stroke="#9a9a9a"/>
<line x1="245.5" y1="137.5" x2="245.5" y2="466.5" stroke="#9a9a9a"/>
<line x1="255.5" y1="137.5" x2="255.5" y2="466.5" stroke="#9a9a9a"/>
<line x1="263.5" y1="137.5" x2="263.5" y2="466.5" stroke="#9a9a9a"/>
<line x1="271.5" y1="137.5" x2="271.5" y2="466.5" stroke="#9a9a9a"/>
<line x1="320.5" y1="137.5" x2="320.5" y2="466.5" stroke="#9a9a9a"/>
<line x1="345.5" y1="137.5" x2="345.5" y2="466.5" stroke="#9a9a9a"/>
<line x1="363.5" y1="137.5" x2="363.5" y2="466.5" stroke="#9a9a9a"/>
<line x1="377.5" y1="137.5" x2="377.5" y2="466.5" stroke="#9a9a9a"/>
<line x1="388.5" y1="137.5" x2="388.5" y2="466.5" stroke="#9a9a9a"/>
<line x1="398.5" y1="137.5" x2="398.5" y2="466.5" stroke="#9a9a9a"/>
<line x1="406.5" y1="137.5" x2="406.5" y2="466.5" stroke="#9a9a9a"/>
<line x1="463.5" y1="137.5" x2="463.5" y2="466.5" stroke="#9a9a9a"/>
<line x1="82.5" y1="166.5" x2="469.5" y2="166.5" stroke="#9a9a9a"/>
<line x1="82.5" y1="187.5" x2="469.5" y2="187.5" stroke="#9a9a9a"/>
<line x1="82.5" y1="209.5" x2="469.5" y2="209.5" stroke="#9a9a9a"/>
<line x1="82.5" y1="251.5" x2="469.5" y2="251.5" stroke="#9a9a9a"/>
<line x1="82.5" y1="273.5" x2="469.5" y2="273.5" stroke="#9a9a9a"/>
<line x1="82.5" y1="294.5" x2="469.5" y2="294.5" stroke="#9a9a9a"/>
<line x1="82.5" y1="337.5" x2="469.5" y2="337.5" stroke="#9a9a9a"/>
<line x1="82.5" y1="358.5" x2="469.5" y2="358.5" stroke="#9a9a9a"/>
<line x1="82.5" y1="379.5" x2="469.5" y2="379.5" stroke="#9a9a9a"/>
<line x1="82.5" y1="422.5" x2="469.5" y2="422.5" stroke="#9a9a9a"/>
<line x1="82.5" y1="443.5" x2="469.5" y2="443.5" stroke="#9a9a9a"/>
<line x1="135.5" y1="137.5" x2="135.5" y2="466.5" stroke="#3a3a3a"/>
<line x1="277.5" y1="137.5" x2="277.5" y2="466.5" stroke="#3a3a3a"/>
<line x1="82.5" y1="145.5" x2="469.5" y2="145.5" stroke="#3a3a3a"/>
<line x1="82.5" y1="230.5" x2="469.5" y2="230.5" stroke="#3a3a3a"/>
<line x1="82.5" y1="315.5" x2="469.5" y2="315.5" stroke="#3a3a3a"/>
<line x1="82.5" y1="401.5" x2="469.5" y2="401.5" stroke="#3a3a3a"/></g>
<polygon points="82.0,139.5 92.4,145.7 103.1,151.9 113.8,159.0 122.7,165.2 128.9,170.6 135.1,175.9 141.3,182.1 146.7,187.4 151.1,195.4 156.4,209.7 161.8,227.4 167.1,241.7 171.6,250.6 179.6,256.8 183.1,256.8 192.0,252.7 195.6,254.1 202.7,266.6 206.2,270.8 210.9,276.2 215.6,290.2 219.4,303.4 223.3,296.4 228.8,286.3 232.7,290.2 235.0,310.4 239.7,319.8 246.7,311.7 253.7,315.9 256.0,336.9 258.3,349.3 264.5,322.9 268.4,335.3 272.3,346.2 278.5,340.8 281.6,363.3 284.0,366.4 287.1,347.8 291.8,366.4 296.4,355.5 300.3,374.2 303.4,365.6 307.3,371.1 310.7,366.4 314.3,378.9 318.2,378.1 320.5,388.2 322.9,381.2 326.0,389.7 328.3,385.1 332.2,392.1 334.4,395.5 337.4,388.1 339.6,395.5 342.6,394.0 344.8,402.8 349.2,404.3 353.6,408.7 356.6,416.9 358.8,408.7 364.0,411.0 369.9,413.2 375.8,419.8 382.4,415.4 384.7,428.0 387.6,416.9 392.0,419.1 394.5,411.7 397.2,425.0 400.9,422.0 410.5,422.0 414.2,425.0 420.1,432.4 423.1,423.5 424.5,435.3 429.0,430.2 434.9,428.7 439.3,432.4 447.4,433.1 449.6,442.7 454.1,439.8 457.0,447.1 462.9,444.9 463.7,461.9 467.4,465.6 469.0,466.0 82.0,466.0" fill="#8a3bbf"/>
<g stroke-width="1" clip-path="url(#pc)"><line x1="92.5" y1="137.5" x2="92.5" y2="466.5" stroke="#cfa2ee"/>
<line x1="103.5" y1="137.5" x2="103.5" y2="466.5" stroke="#cfa2ee"/>
<line x1="112.5" y1="137.5" x2="112.5" y2="466.5" stroke="#cfa2ee"/>
<line x1="121.5" y1="137.5" x2="121.5" y2="466.5" stroke="#cfa2ee"/>
<line x1="128.5" y1="137.5" x2="128.5" y2="466.5" stroke="#cfa2ee"/>
<line x1="177.5" y1="137.5" x2="177.5" y2="466.5" stroke="#cfa2ee"/>
<line x1="203.5" y1="137.5" x2="203.5" y2="466.5" stroke="#cfa2ee"/>
<line x1="220.5" y1="137.5" x2="220.5" y2="466.5" stroke="#cfa2ee"/>
<line x1="234.5" y1="137.5" x2="234.5" y2="466.5" stroke="#cfa2ee"/>
<line x1="245.5" y1="137.5" x2="245.5" y2="466.5" stroke="#cfa2ee"/>
<line x1="255.5" y1="137.5" x2="255.5" y2="466.5" stroke="#cfa2ee"/>
<line x1="263.5" y1="137.5" x2="263.5" y2="466.5" stroke="#cfa2ee"/>
<line x1="271.5" y1="137.5" x2="271.5" y2="466.5" stroke="#cfa2ee"/>
<line x1="320.5" y1="137.5" x2="320.5" y2="466.5" stroke="#cfa2ee"/>
<line x1="345.5" y1="137.5" x2="345.5" y2="466.5" stroke="#cfa2ee"/>
<line x1="363.5" y1="137.5" x2="363.5" y2="466.5" stroke="#cfa2ee"/>
<line x1="377.5" y1="137.5" x2="377.5" y2="466.5" stroke="#cfa2ee"/>
<line x1="388.5" y1="137.5" x2="388.5" y2="466.5" stroke="#cfa2ee"/>
<line x1="398.5" y1="137.5" x2="398.5" y2="466.5" stroke="#cfa2ee"/>
<line x1="406.5" y1="137.5" x2="406.5" y2="466.5" stroke="#cfa2ee"/>
<line x1="463.5" y1="137.5" x2="463.5" y2="466.5" stroke="#cfa2ee"/>
<line x1="82.5" y1="166.5" x2="469.5" y2="166.5" stroke="#cfa2ee"/>
<line x1="82.5" y1="187.5" x2="469.5" y2="187.5" stroke="#cfa2ee"/>
<line x1="82.5" y1="209.5" x2="469.5" y2="209.5" stroke="#cfa2ee"/>
<line x1="82.5" y1="251.5" x2="469.5" y2="251.5" stroke="#cfa2ee"/>
<line x1="82.5" y1="273.5" x2="469.5" y2="273.5" stroke="#cfa2ee"/>
<line x1="82.5" y1="294.5" x2="469.5" y2="294.5" stroke="#cfa2ee"/>
<line x1="82.5" y1="337.5" x2="469.5" y2="337.5" stroke="#cfa2ee"/>
<line x1="82.5" y1="358.5" x2="469.5" y2="358.5" stroke="#cfa2ee"/>
<line x1="82.5" y1="379.5" x2="469.5" y2="379.5" stroke="#cfa2ee"/>
<line x1="82.5" y1="422.5" x2="469.5" y2="422.5" stroke="#cfa2ee"/>
<line x1="82.5" y1="443.5" x2="469.5" y2="443.5" stroke="#cfa2ee"/>
<line x1="135.5" y1="137.5" x2="135.5" y2="466.5" stroke="#c49ae6"/>
<line x1="277.5" y1="137.5" x2="277.5" y2="466.5" stroke="#c49ae6"/>
<line x1="82.5" y1="145.5" x2="469.5" y2="145.5" stroke="#c49ae6"/>
<line x1="82.5" y1="230.5" x2="469.5" y2="230.5" stroke="#c49ae6"/>
<line x1="82.5" y1="315.5" x2="469.5" y2="315.5" stroke="#c49ae6"/>
<line x1="82.5" y1="401.5" x2="469.5" y2="401.5" stroke="#c49ae6"/></g>
<line x1="464.5" y1="138" x2="464.5" y2="466" stroke="#d02a2a" stroke-width="1"/>
<rect x="82.5" y="137.5" width="387" height="329" fill="none" stroke="#000" stroke-width="1"/>
<g stroke-width="1"><line x1="77" y1="145.5" x2="82" y2="145.5" stroke="#000"/><line x1="77" y1="230.5" x2="82" y2="230.5" stroke="#000"/><line x1="77" y1="315.5" x2="82" y2="315.5" stroke="#000"/><line x1="77" y1="401.5" x2="82" y2="401.5" stroke="#000"/><line x1="77" y1="166.5" x2="82" y2="166.5" stroke="#000"/><line x1="77" y1="187.5" x2="82" y2="187.5" stroke="#000"/><line x1="77" y1="209.5" x2="82" y2="209.5" stroke="#000"/><line x1="77" y1="251.5" x2="82" y2="251.5" stroke="#000"/><line x1="77" y1="273.5" x2="82" y2="273.5" stroke="#000"/><line x1="77" y1="294.5" x2="82" y2="294.5" stroke="#000"/><line x1="77" y1="337.5" x2="82" y2="337.5" stroke="#000"/><line x1="77" y1="358.5" x2="82" y2="358.5" stroke="#000"/><line x1="77" y1="379.5" x2="82" y2="379.5" stroke="#000"/><line x1="77" y1="422.5" x2="82" y2="422.5" stroke="#000"/><line x1="77" y1="443.5" x2="82" y2="443.5" stroke="#000"/><line x1="77" y1="464.5" x2="82" y2="464.5" stroke="#000"/><line x1="92.5" y1="466" x2="92.5" y2="470" stroke="#000"/><line x1="103.5" y1="466" x2="103.5" y2="470" stroke="#000"/><line x1="112.5" y1="466" x2="112.5" y2="470" stroke="#000"/><line x1="121.5" y1="466" x2="121.5" y2="470" stroke="#000"/><line x1="128.5" y1="466" x2="128.5" y2="470" stroke="#000"/><line x1="135.5" y1="466" x2="135.5" y2="471" stroke="#000"/><line x1="177.5" y1="466" x2="177.5" y2="470" stroke="#000"/><line x1="203.5" y1="466" x2="203.5" y2="470" stroke="#000"/><line x1="220.5" y1="466" x2="220.5" y2="470" stroke="#000"/><line x1="234.5" y1="466" x2="234.5" y2="470" stroke="#000"/><line x1="245.5" y1="466" x2="245.5" y2="470" stroke="#000"/><line x1="255.5" y1="466" x2="255.5" y2="470" stroke="#000"/><line x1="263.5" y1="466" x2="263.5" y2="470" stroke="#000"/><line x1="271.5" y1="466" x2="271.5" y2="470" stroke="#000"/><line x1="277.5" y1="466" x2="277.5" y2="471" stroke="#000"/><line x1="320.5" y1="466" x2="320.5" y2="470" stroke="#000"/><line x1="345.5" y1="466" x2="345.5" y2="470" stroke="#000"/><line x1="363.5" y1="466" x2="363.5" y2="470" stroke="#000"/><line x1="377.5" y1="466" x2="377.5" y2="470" stroke="#000"/><line x1="388.5" y1="466" x2="388.5" y2="470" stroke="#000"/><line x1="398.5" y1="466" x2="398.5" y2="470" stroke="#000"/><line x1="406.5" y1="466" x2="406.5" y2="470" stroke="#000"/><line x1="413.5" y1="466" x2="413.5" y2="470" stroke="#000"/><line x1="449.5" y1="466" x2="449.5" y2="470" stroke="#000"/><line x1="463.5" y1="466" x2="463.5" y2="470" stroke="#000"/></g>
</svg>
<div class="dbl" style="top:138.6px"><b>0</b>dB</div>
<div class="dbl" style="top:223.8px">-<b>24</b>dB</div>
<div class="dbl" style="top:309.1px">-<b>48</b>dB</div>
<div class="dbl" style="top:394.3px">-<b>72</b>dB</div>
<div class="dbl" style="top:159.9px">-6dB</div>
<div class="dbl" style="top:181.2px">-12dB</div>
<div class="dbl" style="top:202.5px">-18dB</div>
<div class="dbl" style="top:245.2px">-30dB</div>
<div class="dbl" style="top:266.5px">-36dB</div>
<div class="dbl" style="top:287.8px">-42dB</div>
<div class="dbl" style="top:330.4px">-54dB</div>
<div class="dbl" style="top:351.7px">-60dB</div>
<div class="dbl" style="top:373.0px">-66dB</div>
<div class="dbl" style="top:415.6px">-78dB</div>
<div class="dbl" style="top:436.9px">-84dB</div>
<div class="fql" style="left:57.5px">50Hz</div>
<div class="fql" style="left:96.0px"><b>100</b>Hz</div>
<div class="fql" style="left:137.5px">200Hz</div>
<div class="fql" style="left:180.6px">400Hz</div>
<div class="fql" style="left:238.0px"><b>1000</b>Hz</div>
<div class="fql" style="left:305.0px">3000Hz</div>
<div class="fql" style="left:356.7px">7000Hz</div>
<div class="fql" style="font-size:10.6px;top:471px;left:406.5px">16000Hz</div>
<svg class="abs" style="left:0;top:0" width="982" height="900" viewBox="0 0 982 900">
<g fill="none" stroke="#ec1c24" stroke-width="4.2" stroke-linecap="round" stroke-linejoin="round">
<path d="M618.0 17.7 C615.2 18.0 608.6 17.8 601.0 19.4 C593.4 21.0 581.0 24.2 572.4 27.1 C563.8 30.1 557.2 33.1 549.6 37.1 C542.0 41.1 536.3 45.1 526.8 51.3 C517.3 57.5 503.1 66.5 492.6 74.1 C482.1 81.7 472.1 89.4 464.0 97.0 C455.9 104.6 449.8 112.7 444.1 119.8 C438.4 126.9 434.1 133.0 429.8 139.7 C425.5 146.3 423.1 153.5 418.4 159.7 C413.6 165.9 406.5 171.7 401.3 176.8 C396.1 181.9 391.6 185.1 387.3 190.2 C383.0 195.3 378.8 203.3 375.7 207.3 C372.6 211.3 370.8 212.2 368.7 214.3 C366.6 216.4 364.1 218.9 363.2 219.8"/>
<path d="M363.2 219.8 C363.5 218.8 363.2 217.5 364.8 213.5 C366.4 209.5 371.2 197.8 372.9 195.7 C374.6 193.6 374.8 198.1 374.9 201.1 C375.0 204.1 373.3 209.9 373.3 213.5 C373.3 217.1 373.9 221.2 374.9 222.9 C375.9 224.6 376.0 224.3 379.5 223.7 C383.0 223.1 393.2 220.1 395.9 219.4"/>
<path d="M554.3 288.2 C560.9 288.3 587.4 288.7 594.0 288.8 M577.4 273.6 C578.8 274.7 583.5 277.7 586.0 280.0 C588.5 282.3 593.0 285.3 592.7 287.5 C592.4 289.7 587.3 291.2 584.0 293.0 C580.7 294.8 574.7 297.2 572.8 298.1"/>
<path d="M667.5 285.9 C662.5 286.0 642.7 286.6 637.7 286.8 M645.6 272.9 C644.7 274.1 641.5 277.7 640.0 280.0 C638.5 282.3 635.5 284.8 636.3 286.8 C637.1 288.8 640.8 290.3 645.0 292.0 C649.2 293.7 658.8 296.0 661.5 296.8"/>
</g>
</svg>
</body></html>
